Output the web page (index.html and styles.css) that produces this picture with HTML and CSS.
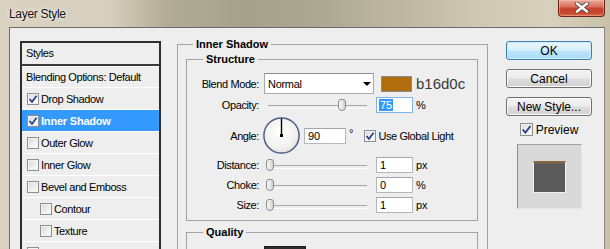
FILE: index.html
```html
<!DOCTYPE html>
<html>
<head>
<meta charset="utf-8">
<title>Layer Style</title>
<link rel="stylesheet" href="styles.css">
</head>
<body>
<div class="window">
  <div class="titlebar">
    <span class="title">Layer Style</span>
    <div class="close">
      <svg width="16" height="11" viewBox="0 0 16 11">
        <path d="M3 1.5 L13 9.5 M13 1.5 L3 9.5" stroke="#5a4a48" stroke-width="4.2" stroke-linecap="round"/>
        <path d="M3 1.5 L13 9.5 M13 1.5 L3 9.5" stroke="#ffffff" stroke-width="2.4" stroke-linecap="round"/>
      </svg>
    </div>
  </div>
  <div class="frame">
    <div class="client">
      <div class="list">
        <div class="list-head">Styles</div>
        <div class="row">Blending Options: Default</div>
        <div class="row"><span class="cb checked"><svg width="10" height="10" viewBox="0 0 10 10"><path d="M1.5 5 L4 7.8 L8.6 1.8" fill="none" stroke="#2c3f86" stroke-width="1.7"/></svg></span>Drop Shadow</div>
        <div class="row selected"><span class="cb checked"><svg width="10" height="10" viewBox="0 0 10 10"><path d="M1.5 5 L4 7.8 L8.6 1.8" fill="none" stroke="#2c3f86" stroke-width="1.7"/></svg></span>Inner Shadow</div>
        <div class="row"><span class="cb"></span>Outer Glow</div>
        <div class="row"><span class="cb"></span>Inner Glow</div>
        <div class="row"><span class="cb"></span>Bevel and Emboss</div>
        <div class="row sub"><span class="cb"></span>Contour</div>
        <div class="row sub"><span class="cb"></span>Texture</div>
        <div class="row"><span class="cb"></span></div>
      </div>

      <fieldset class="outer">
        <legend>Inner Shadow</legend>
        <fieldset class="structure">
          <legend>Structure</legend>
          <div class="frow blend">
            <span class="lbl">Blend Mode:</span>
            <div class="select"><span>Normal</span><span class="arrow"></span></div>
            <span class="swatch"></span>
            <span class="hex">b16d0c</span>
          </div>
          <div class="frow g3">
            <span class="lbl">Opacity:</span>
            <div class="slider"><span class="thumb" style="--v:0.75"></span></div>
            <div class="num focus"><span class="sel">75</span></div>
            <span class="unit">%</span>
          </div>
          <div class="frow angle">
            <span class="lbl">Angle:</span>
            <svg class="dial" width="37" height="37" viewBox="0 0 37 37">
              <defs>
                <radialGradient id="dg" cx="45%" cy="40%" r="65%">
                  <stop offset="0" stop-color="#ffffff"/>
                  <stop offset="0.7" stop-color="#f1f1ee"/>
                  <stop offset="1" stop-color="#dcdcd8"/>
                </radialGradient>
              </defs>
              <circle cx="18.5" cy="18.5" r="17.6" fill="url(#dg)" stroke="#4f5d8a" stroke-width="1.5"/>
              <line x1="18.5" y1="18.5" x2="18.5" y2="1.5" stroke="#000" stroke-width="1.4"/>
              <rect x="17" y="17" width="3" height="3" fill="#000"/>
            </svg>
            <div class="num wide">90</div>
            <span class="deg">°</span>
            <span class="cb checked gl"><svg width="10" height="10" viewBox="0 0 10 10"><path d="M1.5 5 L4 7.8 L8.6 1.8" fill="none" stroke="#2c3f86" stroke-width="1.7"/></svg></span>
            <span class="gltext">Use Global Light</span>
          </div>
          <div class="frow g3">
            <span class="lbl">Distance:</span>
            <div class="slider"><span class="thumb" style="--v:0"></span></div>
            <div class="num">1</div>
            <span class="unit">px</span>
          </div>
          <div class="frow g4">
            <span class="lbl">Choke:</span>
            <div class="slider"><span class="thumb" style="--v:0"></span></div>
            <div class="num">0</div>
            <span class="unit">%</span>
          </div>
          <div class="frow g4">
            <span class="lbl">Size:</span>
            <div class="slider"><span class="thumb" style="--v:0"></span></div>
            <div class="num">1</div>
            <span class="unit">px</span>
          </div>
        </fieldset>
        <fieldset class="quality">
          <legend>Quality</legend>
          <div class="qrow"><span class="contour"></span></div>
        </fieldset>
      </fieldset>

      <div class="buttons">
        <div class="btn default">OK</div>
        <div class="btn">Cancel</div>
        <div class="btn last">New Style...</div>
        <div class="preview-row">
          <span class="cb checked big"><svg width="11" height="11" viewBox="0 0 10 10"><path d="M1.5 5 L4 7.8 L8.6 1.8" fill="none" stroke="#2c3f86" stroke-width="1.7"/></svg></span>
          <span>Preview</span>
        </div>
        <div class="preview-box"><span class="preview-square"></span></div>
      </div>
    </div>
  </div>
</div>
</body>
</html>
```

FILE: styles.css
```css
* { box-sizing: border-box; }
html, body { margin: 0; padding: 0; }
body {
  width: 610px;
  height: 249px;
  overflow: hidden;
  font-family: "Liberation Sans", Arial, sans-serif;
  font-size: 11px;
  color: #000;
}
.window {
  width: 610px;
  height: 249px;
  display: flex;
  flex-direction: column;
  background:
    linear-gradient(90deg, #d9d2c0 0%, #d6cfbd 18%, #b3ad98 27%, #a6a18b 40%, #aaa590 50%, #bab49f 62%, #c2bca7 70%, #cfc8b3 78%, #d7d0bc 90%, #c9c0a9 100%);
}
.titlebar {
  height: 27px;
  flex: none;
  display: flex;
  justify-content: space-between;
  align-items: flex-start;
}
.title {
  margin: 7px 0 0 9px;
  font-size: 12px;
  line-height: 14px;
  letter-spacing: -0.3px;
  color: #111;
  text-shadow: 0 0 5px rgba(255,255,255,0.9), 0 0 2px rgba(255,255,255,0.7);
}
.close {
  width: 47px;
  height: 17px;
  margin-right: 5px;
  border: 1px solid #6a241a;
  border-top: none;
  border-radius: 0 0 4px 4px;
  background: linear-gradient(#e9a899 0%, #d9735f 40%, #c5402a 55%, #c9482e 80%, #d86a4c 100%);
  box-shadow: inset 0 0 0 1px rgba(255,220,210,0.35);
  display: flex;
  align-items: center;
  justify-content: center;
}
.close svg { display: block; margin-top: -1px; }
.frame {
  flex: 1;
  min-height: 0;
  display: flex;
  padding: 0 5px 0 9px;
}
.client {
  flex: 1;
  display: flex;
  align-items: flex-start;
  background: #eeeeee;
  border: 1px solid #6c6c6c;
  border-right-color: #8c8c8c;
  border-bottom: none;
  padding-left: 10px;
  overflow: hidden;
}

/* styles list */
.list {
  width: 141px;
  height: 240px;
  flex: none;
  margin-top: 13px;
  border: 2px solid #2e2e2e;
  border-bottom: none;
  overflow: hidden;
  letter-spacing: -0.4px;
}
.list-head {
  height: 23px;
  padding-left: 4px;
  display: flex;
  align-items: center;
  border-bottom: 2px solid #3c3c3c;
  box-shadow: 0 1px 0 #ffffff;
  padding-bottom: 1px;
}
.row {
  height: 22px;
  border-bottom: 1px solid #ffffff;
  display: flex;
  align-items: center;
  padding-left: 4px;
}
.row.sub { padding-left: 17px; }
.row.selected {
  background: #3399ff;
  color: #ffffff;
  font-weight: bold;
  letter-spacing: -0.2px;
}
.cb {
  width: 12px;
  height: 12px;
  flex: none;
  margin: 0 2px 0 1px;
  border: 1px solid #8e8f8f;
  background: linear-gradient(135deg, #d6d6d6 0%, #eeeeee 55%, #ffffff 100%);
  box-shadow: inset 0 0 0 1px #f3f3f3;
  display: flex;
  align-items: center;
  justify-content: center;
}
.cb.checked { background: linear-gradient(135deg, #d3d8e0 0%, #eef0f4 55%, #ffffff 100%); }
.cb svg { display: block; }

/* fieldsets */
fieldset {
  margin: 0;
  min-width: 0;
  border: 1px solid #a3a3a3;
}
legend {
  padding: 0 3px;
  font-weight: bold;
  font-size: 11px;
  line-height: 14px;
}
.outer {
  width: 311px;
  height: 240px;
  flex: none;
  margin: 9px 0 0 16px;
  padding: 1px 9px 0 8px;
}
.outer > legend { margin-left: 7px; }
.structure { padding: 7px 0 7px 0; }
.structure > legend, .quality > legend { margin-left: 16px; }
.quality {
  margin-top: 4px;
  height: 60px;
  padding: 7px 0 0 0;
}
.qrow { display: flex; padding-left: 77px; }
.contour {
  width: 42px;
  height: 20px;
  border: 1px solid #1b1b1b;
  background: #2c2c2c;
}

.frow {
  display: flex;
  align-items: center;
  height: 16px;
}
.frow.blend { height: 21px; }
.frow.g3 { margin-top: 3px; }
.frow.g4 { margin-top: 4px; }
.frow.angle { height: 37px; margin-top: 4px; }
.lbl {
  width: 72px;
  flex: none;
  margin-right: 5px;
  text-align: right;
  letter-spacing: -0.4px;
}
.select {
  width: 110px;
  height: 21px;
  flex: none;
  background: #ffffff;
  border: 1px solid #a9a9a9;
  border-top-color: #8f8f8f;
  display: flex;
  align-items: center;
  justify-content: space-between;
  padding: 0 1px 0 3px;
  letter-spacing: -0.3px;
}
.arrow {
  width: 0;
  height: 0;
  border-left: 4px solid transparent;
  border-right: 4px solid transparent;
  border-top: 4px solid #000;
  margin-right: 1px;
}
.swatch {
  width: 31px;
  height: 16px;
  flex: none;
  margin-left: 7px;
  border: 1px solid #8a8a8a;
  background: #b16d0c;
}
.hex {
  margin-left: 4px;
  font-size: 15px;
  color: #3a3a3a;
}
.slider {
  position: relative;
  width: 108px;
  height: 16px;
  flex: none;
}
.slider::before {
  content: "";
  position: absolute;
  left: 4px;
  right: 5px;
  top: 8px;
  height: 2px;
  border-top: 1px solid #a8a8a8;
  border-bottom: 1px solid #ffffff;
}
.thumb {
  position: absolute;
  top: 2px;
  left: calc(2px + var(--v) * 96px);
  width: 8px;
  height: 12px;
  border: 1px solid #8c8c8c;
  border-radius: 3px 3px 4px 4px;
  background: linear-gradient(90deg, #f9f9f9, #e4e4e4 60%, #d0d0d0);
}
.num {
  width: 37px;
  height: 16px;
  flex: none;
  margin-left: 4px;
  background: #ffffff;
  border: 1px solid #b5b7bc;
  border-top-color: #a4a6aa;
  display: flex;
  align-items: center;
  padding-left: 3px;
}
.num.focus { border-color: #7eb4ea; padding-left: 2px; }
.num.wide { width: 42px; margin-left: 4px; }
.sel { background: #3399ff; color: #ffffff; padding: 0 1px; line-height: 12px; }
.unit { margin-left: 3px; }
.dial { display: block; flex: none; margin-left: -1px; }
.deg { margin-left: 3px; margin-top: -6px; font-size: 11px; }
.cb.gl { margin-left: 11px; margin-right: 2px; }
.gltext { letter-spacing: -0.4px; }

/* buttons column */
.buttons {
  width: 86px;
  flex: none;
  margin: 13px 0 0 18px;
  display: flex;
  flex-direction: column;
  align-items: center;
  font-size: 12px;
}
.btn {
  width: 86px;
  height: 19px;
  margin-bottom: 9px;
  border: 1px solid #707070;
  border-radius: 3px;
  background: linear-gradient(#f3f3f3 0%, #ececec 48%, #dedede 52%, #d0d0d0 100%);
  box-shadow: inset 0 0 0 1px #fbfbfb;
  display: flex;
  align-items: center;
  justify-content: center;
}
.btn.default {
  border-color: #3c7fb1;
  background: linear-gradient(#eaf6fd 0%, #d9f0fc 48%, #bee6fd 52%, #a7d9f5 100%);
  box-shadow: inset 0 0 0 1px #cdeeff;
}
.btn.last { margin-bottom: 7px; }
.preview-row {
  display: flex;
  align-items: center;
  height: 13px;
}
.cb.big { width: 13px; height: 13px; margin: 0 3px 0 0; }
.preview-box {
  width: 65px;
  height: 65px;
  margin-top: 8px;
  background: #d9d9d9;
  border-top: 1px solid #a2a2a2;
  border-left: 1px solid #8e8e8e;
  border-right: 1px solid #e6e6e6;
  border-bottom: 1px solid #e6e6e6;
  display: flex;
  align-items: center;
  justify-content: center;
}
.preview-square {
  width: 33px;
  height: 32px;
  background: #5b5b5b;
  border: 1px solid #f2f2f2;
  border-top: 2px solid #8a6636;
}
```
